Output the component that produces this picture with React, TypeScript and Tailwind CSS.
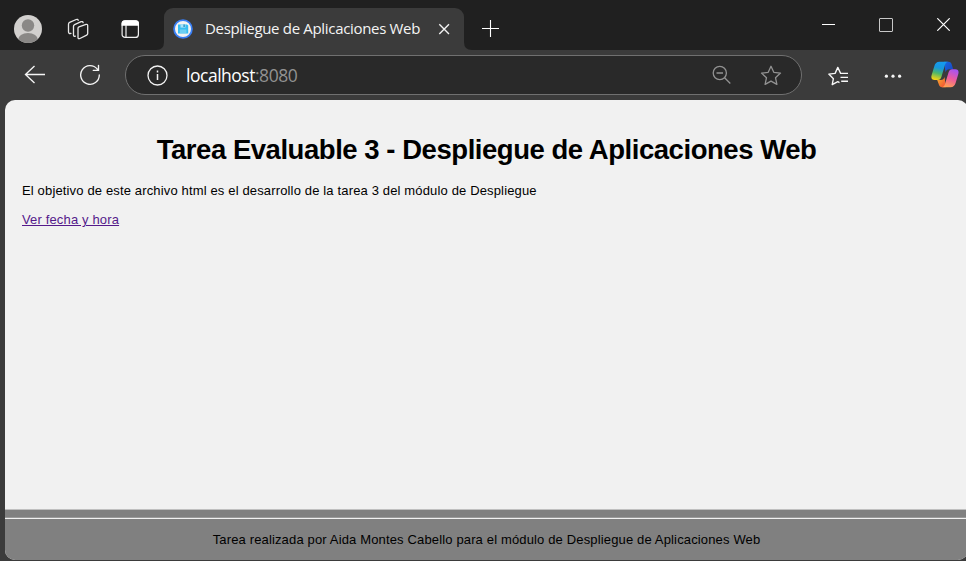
import React from "react";

function Avatar() {
  return (
    <svg className="ml-[14px] mt-[15px] h-7 w-7 shrink-0" viewBox="0 0 28 28">
      <defs>
        <clipPath id="avatar"><circle cx="14" cy="14" r="14" /></clipPath>
      </defs>
      <g clipPath="url(#avatar)">
        <rect width="28" height="28" fill="#d2d0ce" />
        <circle cx="14" cy="10.5" r="6.2" fill="#8a8886" />
        <ellipse cx="14" cy="25" rx="10" ry="7" fill="#8a8886" />
      </g>
    </svg>
  );
}

function Workspaces() {
  return (
    <svg className="ml-[25px] mt-[18px] h-[22px] w-[22px] shrink-0" viewBox="0 0 22 22" fill="none" stroke="#e8e8e8" strokeWidth="1.3" strokeLinecap="round" strokeLinejoin="round">
      <path d="M11 10.2q0-1 1-1.4l7-2.4q1.7-.5 1.7 1.2v8q0 1.1-1 1.6l-6.8 3.3q-1.9.7-1.9-1z" />
      <path d="M8.4 18.2q-1.9.5-1.9-1.3V8.3q0-1.2 1.1-1.7l6.5-2.9q1.7-.6 2 .9" />
      <path d="M4 15.4q-2.5.5-2.5-1.3V6.2q0-1.3 1.1-1.8l6.6-2.9q1.6-.6 2 .8" />
    </svg>
  );
}

function TabActions() {
  return (
    <svg className="ml-8 mt-5 h-[19px] w-[19px] shrink-0" viewBox="0 0 19 19">
      <rect x="1.1" y=".8" width="16.3" height="16.6" rx="3" fill="none" stroke="#f2f2f2" strokeWidth="1.2" />
      <path d="M.6 5.8V3.5Q.6.2 4 .2h10.5q3.4 0 3.4 3.3v2.3z" fill="#fff" />
      <path d="M5 5v12.4" stroke="#f2f2f2" strokeWidth="1.2" />
    </svg>
  );
}

function Favicon() {
  return (
    <svg className="ml-[9px] h-5 w-5 shrink-0" viewBox="0 0 20 20">
      <circle cx="10" cy="10" r="8.9" fill="#f4f3f1" stroke="#397ff5" strokeWidth="1.8" />
      <path d="M5 5.4h9l1.2 1.2v8H5z" fill="#35bdf2" />
      <path d="M7.5 5.4h5v3.2h-5z" fill="#a9e2f8" />
      <path d="M10.5 5.4h1.2v2.5h-1.2z" fill="#1684b7" />
      <path d="M6.8 10.5h6.6v3.6H6.8z" fill="#6ccff3" />
    </svg>
  );
}

function Copilot() {
  return (
    <svg className="mb-0.5 ml-[29px] h-[27px] w-7 shrink-0" viewBox="0 0 28 27">
      <defs>
        <linearGradient id="cl" x1=".6" y1="0" x2=".35" y2="1">
          <stop stopColor="#159bf0" /><stop offset=".35" stopColor="#1797dd" /><stop offset=".65" stopColor="#4eb66a" /><stop offset="1" stopColor="#f3d414" />
        </linearGradient>
        <linearGradient id="cr" x1=".7" y1="0" x2=".3" y2="1">
          <stop stopColor="#a653f2" /><stop offset=".5" stopColor="#ed5b9d" /><stop offset="1" stopColor="#ffa34f" />
        </linearGradient>
        <linearGradient id="ct" x1="0" y1="0" x2="1" y2="1">
          <stop stopColor="#1768e5" /><stop offset="1" stopColor="#1943bd" />
        </linearGradient>
        <linearGradient id="cb" x1="0" y1="0" x2="1" y2="1">
          <stop stopColor="#f6b32b" /><stop offset="1" stopColor="#f24836" />
        </linearGradient>
      </defs>
      <path d="M13 .8h4.2c2.2 0 3.1 1.2 3.7 3.1l1.3 4.3h-3.8c-2.1 0-3.3 1-3.9 3z" fill="url(#ct)" />
      <path d="M14.8 26.2h-3.6c-2.2 0-3-1.4-3.6-3.4L6.2 19h3.5c2.2 0 3.3-1 3.9-3z" fill="url(#cb)" />
      <path d="M8.4.8h9c-2 0-2.9 1.3-3.5 3.3l-3.5 12c-.6 2-1.7 2.9-3.6 2.9H3.7c-2.8 0-3.9-1.8-3.1-4.8l2.7-9C4.2 2.4 5.5.8 8.4.8z" fill="url(#cl)" />
      <path d="M19.5 26.2h-9c2 0 3-1.3 3.5-3.2l3.6-11.8c.6-2 1.8-3 3.7-3h3c2.8 0 3.8 1.9 3 4.8l-2.7 9c-.8 2.7-2.2 4.2-5.1 4.2z" fill="url(#cr)" />
    </svg>
  );
}

function TabStrip() {
  return (
    <header className="flex h-[50px] items-start bg-[#202020]">
      <Avatar />
      <Workspaces />
      <TabActions />
      <svg className="ml-4 h-2 w-2 shrink-0 self-end" viewBox="0 0 8 8"><path d="M8 0v8H0q8 0 8-8" fill="#3b3b3b" /></svg>
      <div className="mt-2 flex h-[42px] w-[300px] shrink-0 items-center rounded-t-[9px] bg-[#3b3b3b]">
        <Favicon />
        <span className="mb-0.5 ml-3 w-[216px] whitespace-nowrap font-['Open_Sans',sans-serif] text-[15px] tracking-[-0.32px] text-[#f4f4f4]">Despliegue de Aplicaciones Web</span>
        <svg className="ml-[17px] h-3 w-3" viewBox="0 0 12 12" stroke="#f2f2f2" strokeWidth="1.4"><path d="m1.3 1.3 9.7 9.7M11 1.3 1.3 11" /></svg>
      </div>
      <svg className="h-2 w-2 shrink-0 self-end" viewBox="0 0 8 8"><path d="M0 0q0 8 8 8H0z" fill="#3b3b3b" /></svg>
      <svg className="ml-[10px] mt-5 h-[17px] w-[17px] shrink-0" viewBox="0 0 17 17" stroke="#fff" strokeWidth="1.1"><path d="M8.5 0v17M0 8.5h17" /></svg>
      <div className="ml-auto mr-[16px] flex shrink-0 items-start">
        <span className="mt-6 h-px w-[13px] bg-white" />
        <span className="ml-[44px] mt-[18px] h-[14px] w-[14px] rounded-[1px] border border-[#c8c8c8]" />
        <svg className="ml-11 mt-[18px] h-[13px] w-[13px]" viewBox="0 0 13 13" stroke="#fff" strokeWidth="1.2"><path d="m.3.3 12.4 12.4M12.7.3.3 12.7" /></svg>
      </div>
    </header>
  );
}

function Toolbar() {
  return (
    <nav className="flex h-[50px] items-center bg-[#3b3b3b]">
      <svg className="ml-6 h-5 w-[22px] shrink-0" viewBox="0 0 22 20" fill="none" stroke="#f5f5f5" strokeWidth="1.35"><path d="M21 9.5H1.5M10.5 1 1.5 9.5l9 8.5" /></svg>
      <svg className="ml-[33px] h-[22px] w-[22px] shrink-0" viewBox="0 0 22 22" fill="none" stroke="#f5f5f5" strokeWidth="1.35" strokeLinecap="round">
        <path d="M20.3 11A9.3 9.3 0 1 1 18.3 5.2M19.5 1.3v5.1h-5.2" />
      </svg>
      <div className="ml-6 flex h-10 w-[677px] shrink-0 items-center rounded-full border border-[#707070] bg-[#292929]">
        <svg className="ml-[21px] h-[21px] w-[21px] shrink-0" viewBox="0 0 21 21" fill="none" stroke="#f2f2f2" strokeWidth="1.3"><circle cx="10.5" cy="10.5" r="9.5" /><path d="M10.5 9v6M10.5 5.6v1.8" strokeWidth="1.5" /></svg>
        <span className="ml-[18px] whitespace-nowrap font-['Open_Sans',sans-serif] text-[17.5px] tracking-[-0.48px] text-white">localhost<span className="text-[#929292]">:8080</span></span>
        <svg className="ml-auto h-5 w-[19px] shrink-0" viewBox="0 0 19 20" fill="none" stroke="#929292" strokeWidth="1.3"><circle cx="7.8" cy="8" r="6.6" /><path d="m12.6 12.8 5.7 5.7M4.5 8H11" /></svg>
        <svg className="ml-[29px] mr-[19px] h-[21px] w-[22px] shrink-0" viewBox="0 0 22 21" fill="none" stroke="#929292" strokeWidth="1.3" strokeLinejoin="round"><path d="m11 1.3 2.8 6 6.7.8-5 4.6 1.4 6.7-5.9-3.3-5.9 3.3 1.4-6.7-5-4.6 6.7-.8z" /></svg>
      </div>
      <svg className="ml-[26px] mt-px h-5 w-[21px] shrink-0" viewBox="0 0 21 20" fill="none" stroke="#f8f8f8" strokeWidth="1.35" strokeLinejoin="round">
        <path d="M13.4 7.4h-.8l-2.8-6-2.7 6-6.3.7 4.6 4.6-1.2 6 5.6-3 1.7.9M13.2 7.4H20M12.5 11.3H20M13.2 15.2H20" />
      </svg>
      <svg className="ml-[35px] mt-px h-1 w-[18px] shrink-0" viewBox="0 0 18 4" fill="#f5f5f5"><circle cx="2.4" cy="2.2" r="1.6" /><circle cx="9" cy="2.2" r="1.6" /><circle cx="15.6" cy="2.2" r="1.6" /></svg>
      <Copilot />
    </nav>
  );
}

export default function App() {
  return (
    <div className="flex h-[561px] w-[966px] flex-col overflow-hidden bg-[#3b3b3b]">
      <TabStrip />
      <Toolbar />
      <div className="ml-[5px] flex h-[460px] w-[963px] flex-col overflow-hidden rounded-[10px] bg-[#f1f1f1] font-['Liberation_Sans',Arial,sans-serif] text-[13px] leading-[15px] tracking-[0.15px] text-black">
        <main className="h-[409px] px-[17px] pt-[34px]">
          <h1 className="whitespace-nowrap text-center text-[27.5px] font-bold leading-8 tracking-[-0.46px]">Tarea Evaluable 3 - Despliegue de Aplicaciones Web</h1>
          <p className="mt-[17px] whitespace-nowrap">El objetivo de este archivo html es el desarrollo de la tarea 3 del módulo de Despliegue</p>
          <p className="mt-[14px] whitespace-nowrap"><a href="#" className="text-[#551a8b] underline">Ver fecha y hora</a></p>
        </main>
        <footer className="flex h-[51px] flex-col border-t border-[#c0c0c0] bg-[#808080] text-center">
          <div className="mt-[7px] h-0.5 border-b border-t border-b-[#f1f1f1] border-t-[#9a9a9a]" />
          <p className="mt-[13px] whitespace-nowrap">Tarea realizada por Aida Montes Cabello para el módulo de Despliegue de Aplicaciones Web</p>
        </footer>
      </div>
    </div>
  );
}
